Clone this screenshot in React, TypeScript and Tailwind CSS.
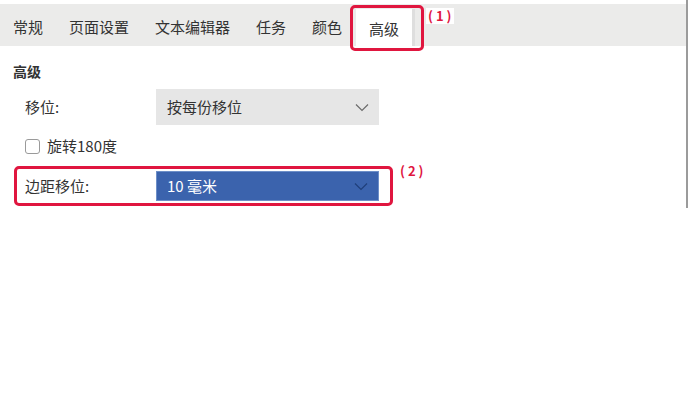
import React from "react";

const font = { fontFamily: '"Noto Sans CJK SC", "Noto Sans", sans-serif' };

function Chevron({ color }: { color: string }) {
  return (
    <svg width="14" height="9" viewBox="0 0 14 9" className="shrink-0">
      <path d="M1 1.5 L7 7.5 L13 1.5" fill="none" stroke={color} strokeWidth="1.2" />
    </svg>
  );
}

function Label({ n }: { n: string }) {
  return (
    <div className="flex items-center gap-[3px] text-[13px] font-bold text-[#e0163f] leading-[14px]">
      <span>(</span>
      <span>{n}</span>
      <span>)</span>
    </div>
  );
}

export default function App() {
  const tabs = ["常规", "页面设置", "文本编辑器", "任务", "颜色"];
  return (
    <div className="relative w-[689px] h-[416px] bg-white text-[#333]" style={font}>
      <div className="flex">
        <div className="w-[686px]">
          <div className="mt-[4px] h-[42px] bg-[#ebebea] flex items-end">
            {tabs.map((t) => (
              <div key={t} className="h-[42px] px-[13px] flex items-center text-[15px] leading-none pt-[3px]">
                {t}
              </div>
            ))}
            <div className="h-[37px] w-[59px] ml-[1px] bg-white border-r-[3px] border-[#dedede] flex items-center justify-center text-[15px] leading-none pt-[2px]">
              高级
            </div>
          </div>
          <div className="pl-[13px] pt-[18px]">
            <div className="text-[14px] font-bold leading-none h-[18px]">高级</div>
            <div className="flex items-center mt-[7px] h-[36px]">
              <div className="w-[143px] pl-[12px] text-[15px]">移位:</div>
              <div className="w-[223px] h-[36px] bg-[#e6e6e6] flex items-center justify-between pl-[11px] pr-[10px] text-[15px]">
                <span>按每份移位</span>
                <Chevron color="#6b6b6b" />
              </div>
            </div>
            <div className="flex items-center mt-[13px] pl-[12px] h-[17px]">
              <div className="w-[15px] h-[15px] border border-[#9a9a9a] rounded-[3px] bg-white" />
              <span className="ml-[7px] text-[15px]">旋转180度</span>
            </div>
            <div className="flex items-center mt-[16px] h-[30px]">
              <div className="w-[143px] pl-[12px] text-[15px]">边距移位:</div>
              <div className="w-[223px] h-[30px] bg-[#3b63ad] border border-[#6d8fc8] flex items-center justify-between pl-[10px] pr-[10px] text-[15px] text-white">
                <span>10 毫米</span>
                <Chevron color="#1f3f7a" />
              </div>
            </div>
          </div>
        </div>
        <div className="w-[2px] h-[208px] bg-[#9b9b9b]" />
      </div>

      <div className="absolute left-[350px] top-[5px] w-[74px] h-[46px] border-[3px] border-[#e0163f] rounded-[5px]" />
      <div className="absolute left-[426px] top-[8px] bg-white px-[2px] py-[1px]">
        <Label n="1" />
      </div>
      <div className="absolute left-[14px] top-[166px] w-[379px] h-[40px] border-[3px] border-[#e0163f] rounded-[5px]" />
      <div className="absolute left-[400px] top-[164px]">
        <Label n="2" />
      </div>
    </div>
  );
}
